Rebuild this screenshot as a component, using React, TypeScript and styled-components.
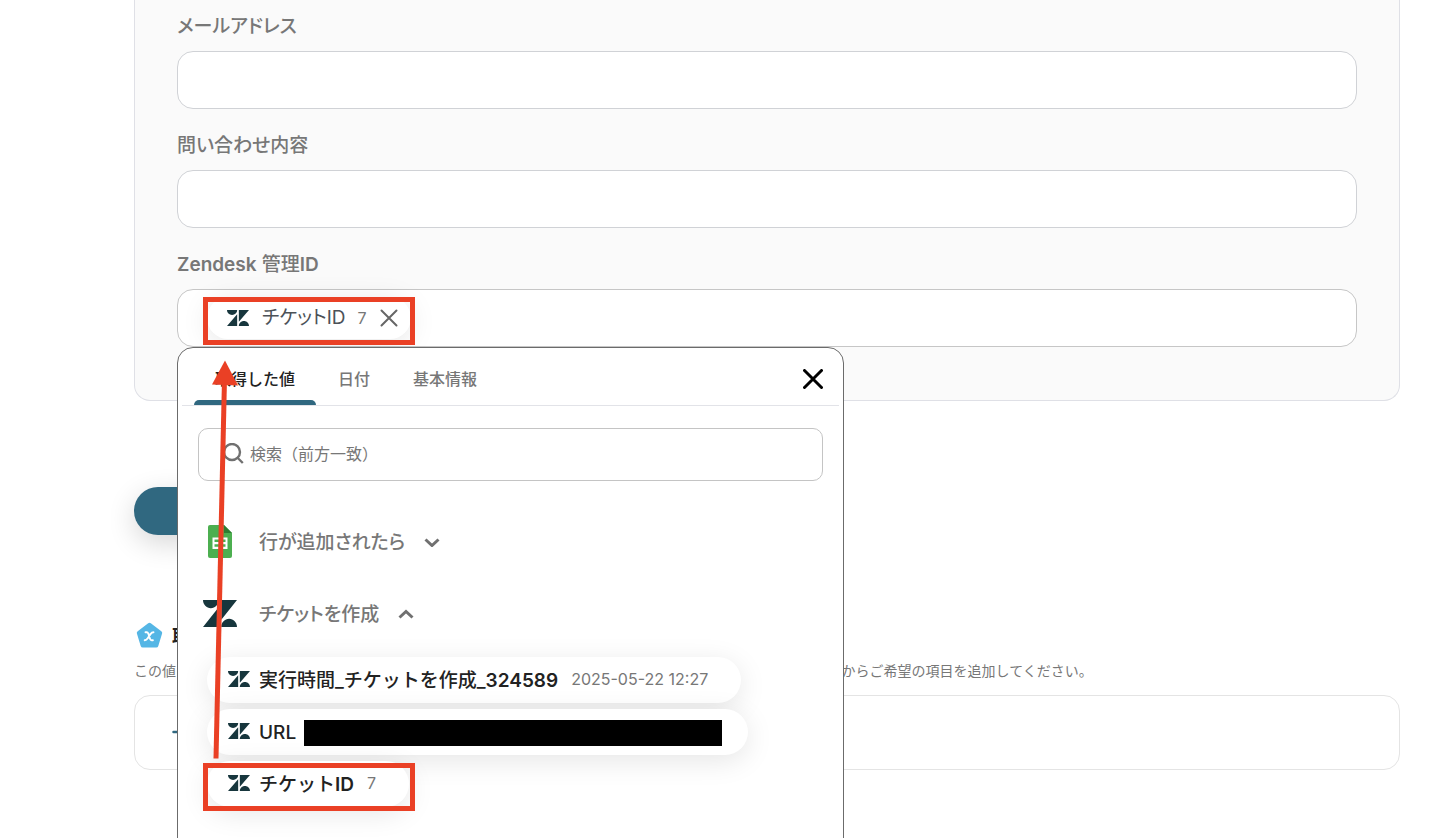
import React from "react";
import styled, { createGlobalStyle } from "styled-components";

const GlobalStyle = createGlobalStyle`
  *, *::before, *::after { box-sizing: border-box; }
  body {
    margin: 0;
    background: #fff;
    color: #222;
    font-family: Inter, "Noto Sans CJK JP", sans-serif;
  }
  button, input {
    font: inherit;
    font-feature-settings: inherit;
    color: inherit;
  }
  button {
    padding: 0;
    border: 0;
    background: none;
    cursor: pointer;
  }
  svg { display: block; flex: none; }
`;

const Page = styled.main`
  position: relative;
  min-height: 100vh;
  padding: 0 50px 68px 134px;
  overflow: hidden;
`;

const Latin = styled.span`
  font-weight: 600;
`;

const FormCard = styled.section`
  display: flex;
  flex-direction: column;
  gap: 23px;
  padding: 13px 42px 53px;
  border: 1px solid #dfe0e6;
  border-top: 0;
  border-radius: 0 0 16px 16px;
  background: #fafafa;
`;

const Field = styled.div`
  display: flex;
  flex-direction: column;
  gap: 10px;
`;

const FieldLabel = styled.label`
  font-size: 19px;
  line-height: 28px;
  font-weight: 500;
  font-feature-settings: "palt";
  color: #777;
`;

const TextInput = styled.input`
  width: 100%;
  height: 58px;
  padding: 0 24px;
  border: 1px solid #d0d2d6;
  border-radius: 16px;
  background: #fff;
  font-size: 18px;
  outline: none;
`;

const TokenBox = styled.div`
  position: relative;
  display: flex;
  align-items: flex-start;
  height: 58px;
  padding: 7px 29px;
  border: 1px solid #c6c6c6;
  border-radius: 16px;
  background: #fff;
`;

const Chip = styled.div`
  display: flex;
  align-items: center;
  height: 42px;
  padding: 0 13px 0 20px;
  border-radius: 21px;
  background: #fff;
  box-shadow: 0 4px 28px rgba(0, 0, 0, 0.1);
  color: #4c5258;
`;

const ChipName = styled.span`
  margin: 0 12px 0 13px;
  font-size: 19px;
  line-height: 28px;
  font-feature-settings: "palt";
`;

const ChipValue = styled.span`
  margin-right: 13px;
  font-size: 16px;
  color: #777;
`;

const ChipRemove = styled.button`
  color: #666;
`;

const Popup = styled.div`
  position: absolute;
  z-index: 2;
  top: 57px;
  left: -1px;
  width: 667px;
  height: 507px;
  padding: 0 4px;
  border: 1px solid #6b6b6b;
  border-radius: 16px;
  background: #fff;
`;

const TabBar = styled.div`
  display: flex;
  align-items: stretch;
  gap: 1px;
  height: 58px;
  padding: 0 16px 0 12px;
  border-bottom: 1px solid #e2e3e8;
`;

const Tab = styled.button<{ $active?: boolean }>`
  display: flex;
  flex-direction: column;
  justify-content: space-between;
  padding-top: 19px;
  font-size: 16px;
  line-height: 24px;
  font-weight: 500;
  color: ${(p) => (p.$active ? "#222" : "#777")};

  &::after {
    content: "";
    align-self: stretch;
    height: 5px;
    border-radius: 5px 5px 0 0;
    background: ${(p) => (p.$active ? "#306880" : "transparent")};
  }
`;

const TabText = styled.span`
  padding: 0 21px;
`;

const CloseButton = styled.button`
  display: flex;
  align-items: center;
  margin-left: auto;
  padding-top: 4px;
  color: #000;
`;

const PopupBody = styled.div`
  display: flex;
  flex-direction: column;
  padding: 22px 16px 0;
`;

const SearchBox = styled.label`
  display: flex;
  align-items: center;
  gap: 6px;
  height: 53px;
  padding: 0 23px 2px;
  border: 1px solid #c4c4c4;
  border-radius: 10px;
  color: #777;
`;

const SearchInput = styled.input`
  flex: 1;
  min-width: 0;
  padding: 0;
  border: 0;
  outline: none;
  background: none;
  font-size: 16px;
  line-height: 24px;
  &::placeholder { color: #777; opacity: 1; }
`;

const Groups = styled.div`
  display: flex;
  flex-direction: column;
  margin-top: 24px;
`;

const GroupButton = styled.button`
  display: flex;
  align-items: center;
  height: 72px;
  font-size: 19px;
  line-height: 28px;
  font-weight: 500;
  font-feature-settings: "palt";
  color: #777;
`;

const GroupIcon = styled.span`
  display: flex;
  justify-content: center;
  width: 44px;
  margin-right: 17px;
`;

const GroupName = styled.span`
  margin-right: 19px;
  padding-top: 3px;
`;

const ValueList = styled.div`
  display: flex;
  flex-direction: column;
  align-items: flex-start;
  gap: 6px;
  padding: 8px 0 0 9px;
`;

const ValuePill = styled.button<{ $compact?: boolean }>`
  display: flex;
  align-items: center;
  height: 46px;
  padding: 0 ${(p) => (p.$compact ? 26 : 33)}px 2px 21px;
  border-radius: 23px;
  background: #fff;
  box-shadow: 0 6px 28px rgba(0, 0, 0, 0.1);
  font-size: 19px;
  line-height: 28px;
  font-weight: 500;
  color: #222;
`;

const ValueName = styled.span`
  margin-left: 9px;
  padding-top: 3px;
`;

const ValueText = styled.span`
  margin-left: 13px;
  font-size: 16px;
  font-weight: 400;
  color: #777;
`;

const Redacted = styled.span`
  width: 418px;
  height: 26px;
  margin: 4px 0 0 8px;
  background: #000;
`;

const SubmitButton = styled.button`
  display: block;
  width: 160px;
  height: 48px;
  margin-top: 86px;
  border-radius: 24px;
  background: #306880;
  box-shadow: 0 8px 28px rgba(0, 0, 0, 0.16);
`;

const OutputHeading = styled.h2`
  display: flex;
  align-items: center;
  gap: 9px;
  height: 28px;
  margin: 86px 0 0;
  padding-left: 2px;
  font-size: 18px;
  font-weight: 600;
`;

const OutputNote = styled.p`
  margin: 11px 0 13px;
  font-size: 14px;
  line-height: 22px;
  color: #777;
`;

const OutputCard = styled.section`
  display: flex;
  align-items: center;
  height: 75px;
  padding: 0 37px 2px;
  border: 1px solid #e4e4e4;
  border-radius: 16px;
`;

const AddButton = styled.button`
  color: #306880;
`;

const Annotation = styled.svg`
  position: absolute;
  z-index: 3;
  top: 0;
  left: 0;
  pointer-events: none;
`;

const ZendeskLogo = ({ width = 22, height = 16 }: { width?: number; height?: number }) => (
  <svg width={width} height={height} viewBox="0 2.9 24 18.2" preserveAspectRatio="none" fill="#17363d" aria-hidden="true">
    <path d="M12.914 2.904V16.29L24 2.905H12.914zM0 2.906C0 5.966 2.483 8.45 5.543 8.45s5.542-2.484 5.543-5.544H0zm11.086 4.807L0 21.096h11.086V7.713zm7.37 7.84c-3.063 0-5.542 2.48-5.542 5.543H24c0-3.06-2.48-5.543-5.543-5.543z" />
  </svg>
);

const SheetsLogo = () => (
  <svg width="24" height="33" viewBox="0 0 24 33" aria-hidden="true">
    <path d="M2 0H16L24 8V31a2 2 0 0 1-2 2H2a2 2 0 0 1-2-2V2a2 2 0 0 1 2-2z" fill="#4caf50" />
    <path d="M16 0l8 8h-8z" fill="#2e7d32" />
    <path d="M4.500 12.500h15v11.500H4.500zM6.500 14.500v2.500h4.500v-2.500zM13 14.500v2.500h4.500v-2.500zM6.500 19.200v2.500h4.500v-2.500zM13 19.200v2.500h4.500v-2.500z" fill="#fff" fillRule="evenodd" />
  </svg>
);

const Cross = ({ size, weight }: { size: number; weight: number }) => (
  <svg width={size} height={size} viewBox={`0 0 ${size} ${size}`} fill="none" stroke="currentColor" strokeWidth={weight} strokeLinecap="round" aria-hidden="true">
    <path d={`M1.500 1.500L${size - 1.5} ${size - 1.5}M${size - 1.5} 1.500L1.500 ${size - 1.5}`} />
  </svg>
);

const Chevron = ({ up }: { up?: boolean }) => (
  <svg width="16" height="12" viewBox="0 0 16 12" fill="none" stroke="#707070" strokeWidth="3" aria-hidden="true">
    <path d={up ? "M1.500 10.500L8 4.500L14.500 10.500" : "M1.500 4.500L8 10.500L14.500 4.500"} />
  </svg>
);

const SearchGlyph = () => (
  <svg width="22" height="22" viewBox="0 0 22 22" fill="none" stroke="#707070" strokeWidth="2.400" aria-hidden="true">
    <circle cx="10" cy="9" r="8" />
    <path d="M15.800 15l5 5" />
  </svg>
);

const PentagonBadge = () => (
  <svg width="27" height="27" viewBox="0 0 27 27" aria-hidden="true">
    <path d="M12.200 1.200a2 2 0 0 1 2.600 0l10.500 8a2.200 2.200 0 0 1 .8 2.400L22.300 24a2.200 2.200 0 0 1-2.100 1.600H6.800A2.200 2.200 0 0 1 4.700 24L.9 11.600a2.200 2.200 0 0 1 .8-2.400z" fill="#55b6e5" />
    <path d="M9.500 10.200h1.300c.8 0 1.100.3 1.500 1.300l1.700 5.300c.3 1 .8 1.500 1.600 1.500h1.300M17.500 10.200c-1.300 0-2.100.6-3 1.900l-2.800 4.200c-.9 1.400-1.600 2-3 2" fill="none" stroke="#fff" strokeWidth="1.900" strokeLinecap="round" />
  </svg>
);

export default function App() {
  return (
    <Page>
      <GlobalStyle />
      <FormCard>
        <Field>
          <FieldLabel htmlFor="email">メールアドレス</FieldLabel>
          <TextInput id="email" type="text" />
        </Field>
        <Field>
          <FieldLabel htmlFor="inquiry">問い合わせ内容</FieldLabel>
          <TextInput id="inquiry" type="text" />
        </Field>
        <Field>
          <FieldLabel as="span" id="ticket-label"><Latin>Zendesk</Latin> 管理<Latin>ID</Latin></FieldLabel>
          <TokenBox role="group" aria-labelledby="ticket-label">
            <Chip>
              <ZendeskLogo />
              <ChipName>チケットID</ChipName>
              <ChipValue>7</ChipValue>
              <ChipRemove type="button" aria-label="削除">
                <Cross size={18} weight={2} />
              </ChipRemove>
            </Chip>
            <Popup>
              <TabBar role="tablist">
                <Tab type="button" role="tab" aria-selected $active><TabText>取得した値</TabText></Tab>
                <Tab type="button" role="tab"><TabText>日付</TabText></Tab>
                <Tab type="button" role="tab"><TabText>基本情報</TabText></Tab>
                <CloseButton type="button" aria-label="閉じる">
                  <Cross size={20} weight={3} />
                </CloseButton>
              </TabBar>
              <PopupBody>
                <SearchBox>
                  <SearchGlyph />
                  <SearchInput type="text" aria-label="検索" placeholder="検索（前方一致）" />
                </SearchBox>
                <Groups>
                  <GroupButton type="button" aria-expanded={false}>
                    <GroupIcon><SheetsLogo /></GroupIcon>
                    <GroupName>行が追加されたら</GroupName>
                    <Chevron />
                  </GroupButton>
                  <GroupButton type="button" aria-expanded>
                    <GroupIcon><ZendeskLogo width={34} height={27} /></GroupIcon>
                    <GroupName>チケットを作成</GroupName>
                    <Chevron up />
                  </GroupButton>
                  <ValueList>
                    <ValuePill type="button">
                      <ZendeskLogo />
                      <ValueName>実行時間_チケットを作成_<Latin>324589</Latin></ValueName>
                      <ValueText>2025-05-22 12:27</ValueText>
                    </ValuePill>
                    <ValuePill type="button" $compact>
                      <ZendeskLogo />
                      <ValueName>URL</ValueName>
                      <Redacted />
                    </ValuePill>
                    <ValuePill type="button">
                      <ZendeskLogo />
                      <ValueName>チケット<Latin>ID</Latin></ValueName>
                      <ValueText>7</ValueText>
                    </ValuePill>
                  </ValueList>
                </Groups>
              </PopupBody>
            </Popup>
          </TokenBox>
        </Field>
      </FormCard>

      <SubmitButton type="button" aria-label="テスト" />

      <OutputHeading>
        <PentagonBadge />
        取得した値
      </OutputHeading>
      <OutputNote>
        この値は後続のオペレーションで利用できます。取得する値を変更したい場合には、下の「+取得する値を追加」からご希望の項目を追加してください。
      </OutputNote>
      <OutputCard>
        <AddButton type="button" aria-label="取得する値を追加">
          <svg width="16" height="16" viewBox="0 0 16 16" stroke="currentColor" strokeWidth="2.500" strokeLinecap="round" aria-hidden="true">
            <path d="M8 1.500v13M1.500 8h13" />
          </svg>
        </AddButton>
      </OutputCard>

      <Annotation width="450" height="838" viewBox="0 0 450 838" aria-hidden="true">
        <g fill="none" stroke="#ea4025" strokeWidth="5">
          <rect x="205.500" y="299.500" width="207" height="43" />
          <rect x="205.500" y="765.500" width="207" height="43" />
          <path d="M216 758.500L224.400 383" />
        </g>
        <path d="M225 360.500L212 384.500L238 385.500z" fill="#ea4025" />
      </Annotation>
    </Page>
  );
}
